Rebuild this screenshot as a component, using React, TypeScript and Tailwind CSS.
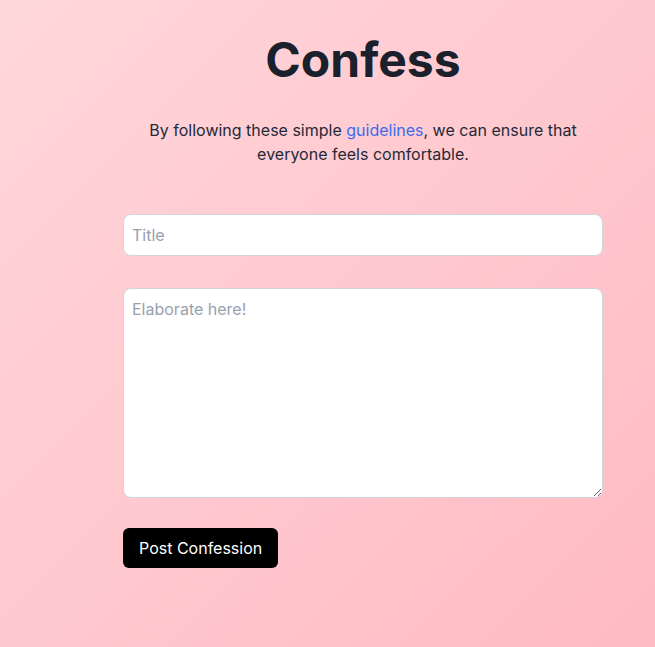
export default function App() {
  return (
    <div
      className="min-h-screen w-full bg-gradient-to-br from-[#ffd7db] to-[#ffbac3]"
      style={{ fontFamily: 'Inter, "Noto Sans", sans-serif' }}
    >
      <main className="ml-[123px] flex w-[480px] flex-col pt-[36px]">
        <h1 className="text-center text-5xl font-bold leading-none text-[#1a202c]">Confess</h1>
        <p className="mt-[34px] text-center text-base leading-6 text-[#1f2937]">
          By following these simple{' '}
          <a href="#" className="text-[#3b6cf0]">
            guidelines
          </a>
          , we can ensure that everyone feels comfortable.
        </p>
        <form className="mt-12 flex flex-col">
          <input
            type="text"
            placeholder="Title"
            className="h-[42px] w-full rounded-lg border border-gray-300 bg-white px-2 text-base text-gray-800 outline-none placeholder:text-gray-400"
          />
          <textarea
            placeholder="Elaborate here!"
            className="mt-8 h-[210px] w-full rounded-lg border border-gray-300 bg-white px-2 py-2 text-base text-gray-800 outline-none placeholder:text-gray-400"
          />
          <div className="mt-[30px]">
            <button type="button" className="h-10 rounded-md bg-black px-4 text-base text-white">
              Post Confession
            </button>
          </div>
        </form>
      </main>
    </div>
  );
}
